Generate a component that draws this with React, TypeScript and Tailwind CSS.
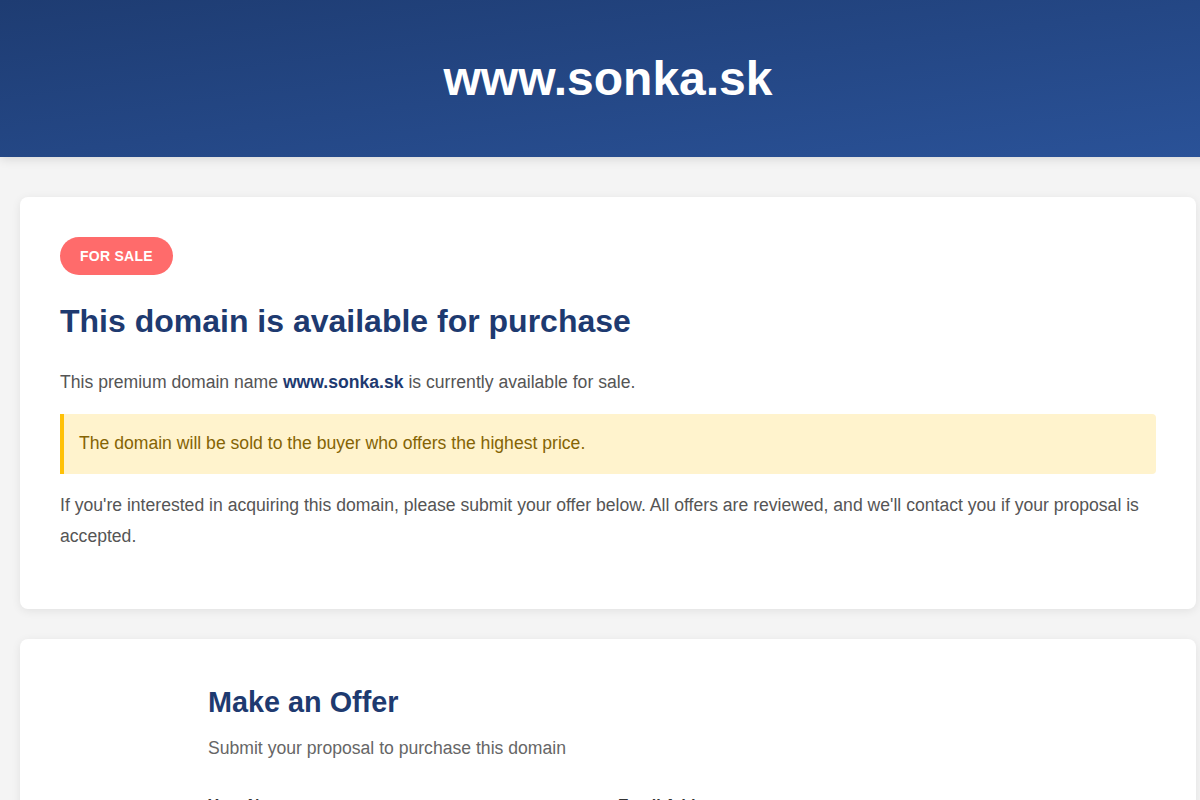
export default function App() {
  return (
    <div className="w-full overflow-hidden bg-[#f4f4f4] font-['Liberation_Sans',Arial,sans-serif] text-[#555]">
      <div className="w-[1216px] pb-10">
        <header className="flex h-[157px] items-center justify-center bg-gradient-to-br from-[#1e3c72] to-[#2a5298] shadow-[0_2px_10px_rgba(0,0,0,0.12)]">
          <h1 className="text-[48px] font-bold leading-none text-white">www.sonka.sk</h1>
        </header>

        <section className="mx-5 mt-10 rounded-lg bg-white p-10 shadow-[0_2px_10px_rgba(0,0,0,0.08)]">
          <div className="mb-[27px]">
            <span className="inline-block h-[38px] rounded-full bg-[#ff6b6b] px-5 text-[14px] font-bold leading-[38px] tracking-[0.25px] text-white">
              FOR SALE
            </span>
          </div>
          <h2 className="mb-[27px] text-[32px] font-bold leading-[1.2] text-[#1e3a70]">
            This domain is available for purchase
          </h2>
          <p className="mb-[15px] text-[17.6px] leading-[1.8]">
            This premium domain name <strong className="text-[#1e3a70]">www.sonka.sk</strong> is currently available for
            sale.
          </p>
          <div className="mb-4 rounded-r border-l-4 border-[#ffc107] bg-[#fff3cd] px-[15px] py-[14px] text-[17.6px] leading-[1.8] text-[#856404]">
            The domain will be sold to the buyer who offers the highest price.
          </div>
          <p className="mb-4 text-[17.6px] leading-[1.8]">
            If you're interested in acquiring this domain, please submit your offer below. All offers are reviewed, and
            we'll contact you if your proposal is accepted.
          </p>
        </section>

        <section className="mx-5 mt-[30px] rounded-lg bg-white p-10 shadow-[0_2px_10px_rgba(0,0,0,0.08)]">
          <div className="mx-auto max-w-[800px] pt-[6px]">
            <h2 className="mb-[13px] text-[28.8px] font-bold leading-[1.2] text-[#1e3a70]">Make an Offer</h2>
            <p className="text-[17.6px] leading-[1.8] text-[#666]">Submit your proposal to purchase this domain</p>
            <form className="mt-[29px] grid grid-cols-2 gap-5">
              <div>
                <label className="mb-2 block text-[16px] font-bold leading-[1.6] text-[#333]">Your Name</label>
                <input className="h-12 w-full rounded-md border border-[#ddd] px-4 text-[16px] outline-none" />
              </div>
              <div>
                <label className="mb-2 block text-[16px] font-bold leading-[1.6] text-[#333]">Email Address</label>
                <input className="h-12 w-full rounded-md border border-[#ddd] px-4 text-[16px] outline-none" />
              </div>
            </form>
          </div>
        </section>
      </div>
    </div>
  );
}
